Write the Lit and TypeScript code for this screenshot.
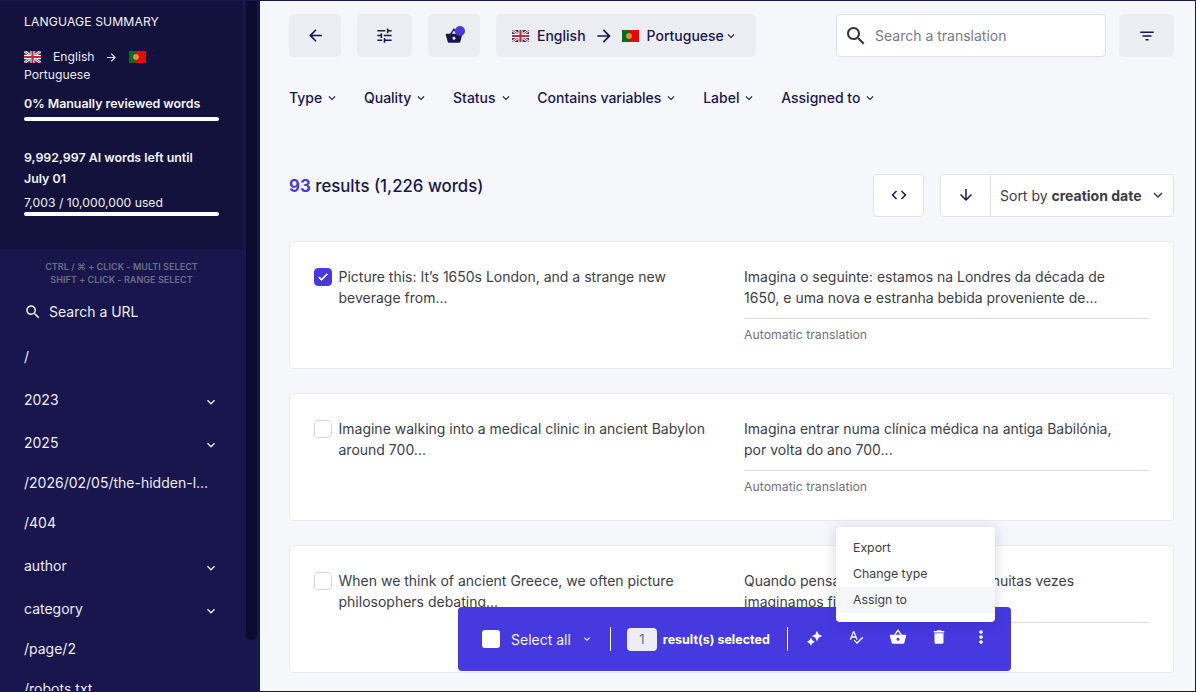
import { LitElement, html, css, svg } from "lit";
import { customElement } from "lit/decorators.js";

const P = {
  back: "M20 11H7.83l5.59-5.59L12 4l-8 8 8 8 1.41-1.41L7.83 13H20v-2z",
  tune: "M3 17v2h6v-2H3zM3 5v2h10V5H3zm10 16v-2h8v-2h-8v-2h-2v6h2zM7 9v2H3v2h4v2h2V9H7zm14 4v-2H11v2h10zm-6-4h2V7h4V5h-4V3h-2v6z",
  basket: "M17.21 9l-4.38-6.56c-.19-.28-.51-.42-.83-.42-.32 0-.64.14-.83.43L6.79 9H2c-.55 0-1 .45-1 1 0 .09.01.18.04.27l2.54 9.27c.23.84 1 1.46 1.92 1.46h13c.92 0 1.69-.62 1.93-1.46l2.54-9.27L23 10c0-.55-.45-1-1-1h-4.79zM9 9l3-4.4L15 9H9zm3 8c-1.1 0-2-.9-2-2s.9-2 2-2 2 .9 2 2-.9 2-2 2z",
  search: "M15.5 14h-.79l-.28-.27C15.41 12.59 16 11.11 16 9.5 16 5.91 13.09 3 9.5 3S3 5.91 3 9.5 5.91 16 9.5 16c1.61 0 3.09-.59 4.23-1.57l.27.28v.79l5 4.99L20.49 19l-4.99-5zm-6 0C7.01 14 5 11.99 5 9.5S7.01 5 9.5 5 14 7.01 14 9.5 11.99 14 9.5 14z",
  filter: "M10 18h4v-2h-4v2zM3 6v2h18V6H3zm3 7h12v-2H6v2z",
  chev: "M16.59 8.59L12 13.17 7.41 8.59 6 10l6 6 6-6z",
  code: "M9.4 16.6L4.8 12l4.6-4.6L8 6l-6 6 6 6 1.4-1.4zm5.2 0l4.6-4.6-4.6-4.6L16 6l6 6-6 6-1.4-1.4z",
  down: "M20 12l-1.41-1.41L13 16.17V4h-2v12.17l-5.58-5.59L4 12l8 8 8-8z",
  fwd: "M12 4l-1.41 1.41L16.17 11H4v2h12.17l-5.58 5.59L12 20l8-8z",
  trash: "M6 19c0 1.1.9 2 2 2h8c1.1 0 2-.9 2-2V7H6v12zM19 4h-3.5l-1-1h-5l-1 1H5v2h14V4z",
  more: "M12 8.2c1.2 0 2.2-1 2.2-2.2S13.2 3.8 12 3.8 9.800 4.800 9.800 6s1 2.200 2.200 2.200zm0 1.600c-1.200 0-2.200 1-2.200 2.200s1 2.200 2.200 2.200 2.200-1 2.200-2.200-1-2.200-2.200-2.200zm0 6c-1.200 0-2.200 1-2.200 2.200s1 2.200 2.200 2.200 2.200-1 2.200-2.200-1-2.200-2.200-2.200z",
  spell: "M12.45 16h2.09L9.43 3H7.57L2.46 16h2.09l1.12-3h5.64l1.14 3zm-6.02-5L8.5 5.48 10.57 11H6.43zm15.16.59l-8.09 8.09L9.83 16l-1.41 1.41 5.09 5.09L23 13l-1.41-1.41z",
  spark: "M15.5 2.500l2.300 5.200 5.200 2.300-5.200 2.300-2.300 5.200-2.300-5.200-5.200-2.300 5.200-2.300zM7 12.500l2 3.500 3.500 2-3.500 2-2 3.500-2-3.500-3.500-2 3.500-2z",
  check: "M9 16.17L4.83 12l-1.42 1.41L9 19 21 7l-1.41-1.41z",
};

const icon = (d: string, size: number, cls = "") =>
  html`<svg class=${cls} width=${size} height=${size} viewBox="0 0 24 24" fill="currentColor" aria-hidden="true">${svg`<path d=${d}></path>`}</svg>`;

const ukFlag = html`<svg class="flag" width="17" height="12" viewBox="0 0 17 12" aria-hidden="true">${svg`
  <rect width="17" height="12" fill="#2b3a80"></rect>
  <path d="M0 0L17 12M17 0L0 12" stroke="#fff" stroke-width="2.6"></path>
  <path d="M0 0L17 12M17 0L0 12" stroke="#c8283c" stroke-width="0.9"></path>
  <path d="M8.5 0V12M0 6H17" stroke="#fff" stroke-width="4"></path>
  <path d="M8.5 0V12M0 6H17" stroke="#c8283c" stroke-width="2.2"></path>`}</svg>`;

const ptFlag = html`<svg class="flag" width="17" height="12" viewBox="0 0 17 12" aria-hidden="true">${svg`
  <rect width="17" height="12" fill="#f40000"></rect>
  <rect width="7" height="12" fill="#0a6a1e"></rect>
  <circle cx="7" cy="6" r="2.7" fill="#e8c52a"></circle>
  <circle cx="7" cy="6" r="1.5" fill="#c8202a"></circle>
  <circle cx="7" cy="6" r="0.8" fill="#f4f4f4"></circle>`}</svg>`;

const tree: [string, boolean][] = [
  ["/", false],
  ["2023", true],
  ["2025", true],
  ["/2026/02/05/the-hidden-l...", false],
  ["/404", false],
  ["author", true],
  ["category", true],
  ["/page/2", false],
  ["/robots.txt", false],
];

const cards = [
  {
    src: "Picture this: It’s 1650s London, and a strange new beverage from...",
    tgt: "Imagina o seguinte: estamos na Londres da década de 1650, e uma nova e estranha bebida proveniente de...",
    on: true,
  },
  {
    src: "Imagine walking into a medical clinic in ancient Babylon around 700...",
    tgt: "Imagina entrar numa clínica médica na antiga Babilónia, por volta do ano 700...",
    on: false,
  },
  {
    src: "When we think of ancient Greece, we often picture philosophers debating...",
    tgt: "Quando pensamos na Grécia antiga, muitas vezes imaginamos filósofos a debater...",
    on: false,
  },
];

const filters = ["Type", "Quality", "Status", "Contains variables", "Label", "Assigned to"];

@customElement("app-root")
export class AppRoot extends LitElement {
  static styles = css`
    :host {
      display: block;
      position: relative;
      width: 1196px;
      height: 692px;
      box-sizing: border-box;
      border: 1px solid #18164d;
      border-left-width: 0;
      overflow: hidden;
      font-family: Inter, "Liberation Sans", sans-serif;
      color: #18164d;
      background: #f6f7fb;
    }
    * { box-sizing: border-box; }
    svg { display: block; flex: none; }
    .page { display: flex; height: 100%; }

    .sidebar { width: 260px; flex: none; display: flex; background: #18164d; color: #f4f4fa; height: 100%; }
    .side-col { width: 246px; flex: none; overflow: hidden; height: 100%; }
    .thumb { width: 11px; height: 640px; margin-top: -1px; background: #0c0b2e; border-radius: 0 0 5px 5px; flex: none; }

    .summary { width: 243px; height: 248px; background: #12123c; padding: 13px 0 0 24px; font-size: 12.2px; }
    .sum-title { font-size: 12.2px; line-height: 16px; font-weight: 400; letter-spacing: 0.1px; }
    .langs { margin-top: 18px; width: 195px; line-height: 18px; display: flex; flex-wrap: wrap; align-items: center; color: #e8e8f4; }
    .langs .en { margin: 0 10.5px 0 12px; }
    .langs .arr { margin-right: 10.5px; }
    .langs .pt-name { flex-basis: 100%; }
    .sum-bold { font-weight: 600; font-size: 12.4px; line-height: 21px; width: 195px; }
    .s1 { margin-top: 10px; line-height: 20px; }
    .bar { width: 195px; height: 4px; border-radius: 2px; background: #fff; }
    .s1 + .bar { margin-top: 3px; }
    .s2 { margin-top: 26px; }
    .used { font-size: 12.2px; margin-top: 5px; line-height: 18px; color: #f0f0f8; }
    .used + .bar { margin-top: 0; }

    .hint { width: 243px; margin-top: 11px; text-align: center; font-size: 9px; line-height: 13px; font-weight: 600; color: #6e6e88; letter-spacing: 0.05px; }
    .url { display: flex; align-items: center; padding-left: 24px; margin-top: 13.5px; height: 24px; gap: 7px; font-size: 14px; color: #ecedf6; }
    .tree { margin-top: 12.5px; }
    .row { display: flex; align-items: center; justify-content: space-between; width: 195px; margin-left: 24px; height: 40px; font-size: 14px; color: #ecedf6; white-space: nowrap; }
    .row.exp { height: 43px; padding-top: 3px; }
    .row.exp svg { margin-top: 6px; }

    .main { flex: 1; min-width: 0; padding: 13px 21px 0 29px; overflow: hidden; height: 100%; }
    .topbar { display: flex; align-items: stretch; height: 43px; }
    .tbtn { position: relative; width: 52px; background: #ecedf2; border-radius: 5px; display: flex; align-items: center; justify-content: center; margin-right: 16px; }
    .tbtn.w55 { width: 55px; }
    .dot { position: absolute; left: 27px; top: 12px; width: 10px; height: 10px; border-radius: 50%; background: #4639e0; }
    .lang-btn { width: 260px; margin-left: -0.5px; background: #ecedf2; border-radius: 5px; display: flex; align-items: center; padding-left: 16.500px; font-size: 14px; font-weight: 500; }
    .lang-btn .en { margin: 0 8px 0 8px; }
    .lang-btn .arr { margin-right: 8px; }
    .lang-btn .pt { margin-left: 8px; }
    .search { margin-left: auto; width: 270px; background: #fff; border: 1px solid #dfe1ea; border-radius: 4px; display: flex; align-items: center; padding-left: 7px; gap: 7px; font-size: 14px; color: #777985; }
    .search svg { color: #33333f; }
    .fbtn { width: 55px; margin: 0 0 0 13px; background: #ecedf2; border-radius: 5px; display: flex; align-items: center; justify-content: center; }

    .filters { display: flex; gap: 24.750px; margin-top: 28px; height: 24px; align-items: center; font-size: 14px; font-weight: 500; }
    .filter { display: flex; align-items: center; gap: 3px; }
    .filter svg { margin-top: 2px; }

    .results-head { display: flex; justify-content: space-between; margin-top: 55px; height: 77px; }
    .count { font-size: 16.8px; font-weight: 500; line-height: 24px; margin-top: 10px; }
    .count b { color: #4639e0; font-weight: 700; }
    .controls { display: flex; gap: 16px; align-items: flex-start; margin-top: 9.500px; }
    .cbtn { height: 43px; width: 51px; background: #fff; border: 1px solid #e2e4ec; border-radius: 4px; display: flex; align-items: center; justify-content: center; }
    .sortgrp { display: flex; height: 43px; background: #fff; border: 1px solid #e2e4ec; border-radius: 4px; }
    .sortgrp .arrow { width: 50px; display: flex; align-items: center; justify-content: center; border-right: 1px solid #e2e4ec; }
    .sortgrp .sort { width: 182px; display: flex; align-items: center; justify-content: space-between; padding: 0 6px 0 9px; font-size: 14px; color: #3b3b48; }
    .sort b { font-weight: 700; }

    .cards { display: flex; flex-direction: column; gap: 24px; }
    .card { height: 128px; background: #fff; border: 1px solid #e9eaf1; border-radius: 4px; padding: 24px 24px 0; display: grid; grid-template-columns: 430px 405px; font-size: 14px; line-height: 21px; color: #3d3d48; }
    .src { display: flex; gap: 6.500px; padding-right: 30px; }
    .box { width: 18px; height: 18px; margin-top: 2px; flex: none; border-radius: 4px; border: 1px solid #d4d6df; background: #fff; display: flex; align-items: center; justify-content: center; color: #fff; }
    .box.on { background: #4639e0; border-color: #4639e0; }
    .box svg { stroke: currentColor; stroke-width: 2; }
    .tgt-text { height: 52px; padding-right: 30px; }
    .tgt-foot { border-top: 1px solid #dcdde3; padding-top: 6px; font-size: 12.300px; line-height: 20px; color: #71727e; }

    .action { position: absolute; left: 458px; top: 606px; width: 553px; height: 64px; background: #4639e0; border-radius: 4px; color: #fff; display: flex; align-items: center; padding-left: 24px; }
    .sel-box { width: 18px; height: 18px; border-radius: 3px; background: #fff; }
    .sel-all { font-size: 14px; margin: 0 10px 0 11px; color: #f2f2ff; }
    .sep { width: 1px; height: 24px; background: #fff; margin: 0 16px 0 17px; }
    .sep.second { margin: 0 6px 0 17px; }
    .num { width: 30px; height: 23px; border-radius: 4px; background: #ecedf2; color: #6b6c7c; font-size: 13px; display: flex; align-items: center; justify-content: center; }
    .sel-text { font-size: 12.500px; font-weight: 700; margin-left: 6px; white-space: nowrap; }
    .icons { display: flex; align-items: center; margin-top: -4px; }
    .ic { width: 41.500px; display: flex; align-items: center; justify-content: center; }

    .menu { position: absolute; left: 836px; top: 526px; width: 159px; height: 95px; background: #fff; border-radius: 4px; box-shadow: 0 2px 14px rgba(30, 30, 80, 0.18); padding-top: 7.500px; font-size: 12.300px; color: #3d3d48; }
    .mi { height: 26px; padding-left: 17px; display: flex; align-items: center; }
    .mi.hover { background: #f6f7f9; }
  `;

  render() {
    return html`
      <div class="page">
        <aside class="sidebar">
          <div class="side-col">
            <section class="summary">
              <div class="sum-title">LANGUAGE SUMMARY</div>
              <div class="langs">
                ${ukFlag}<span class="en">English</span>
                ${icon(P.fwd, 13, "arr")}${ptFlag}<span class="pt-name">Portuguese</span>
              </div>
              <div class="sum-bold s1">0% Manually reviewed words</div>
              <div class="bar"></div>
              <div class="sum-bold s2">9,992,997 AI words left until July 01</div>
              <div class="used">7,003 / 10,000,000 used</div>
              <div class="bar"></div>
            </section>
            <div class="hint">CTRL / ⌘ + CLICK - MULTI SELECT<br />SHIFT + CLICK - RANGE SELECT</div>
            <div class="url">${icon(P.search, 18)}<span>Search a URL</span></div>
            <div class="tree">
              ${tree.map(
                ([t, e]) => html`<div class="row ${e ? "exp" : ""}"><span>${t}</span>${e ? icon(P.chev, 16) : ""}</div>`
              )}
            </div>
          </div>
          <div class="thumb"></div>
        </aside>

        <main class="main">
          <div class="topbar">
            <div class="tbtn">${icon(P.back, 19)}</div>
            <div class="tbtn w55">${icon(P.tune, 19)}</div>
            <div class="tbtn">${icon(P.basket, 18)}<span class="dot"></span></div>
            <div class="lang-btn">
              ${ukFlag}<span class="en">English</span>
              ${icon(P.fwd, 20, "arr")}${ptFlag}<span class="pt">Portuguese</span>${icon(P.chev, 14)}
            </div>
            <div class="search">${icon(P.search, 24)}<span>Search a translation</span></div>
            <div class="fbtn">${icon(P.filter, 18)}</div>
          </div>

          <div class="filters">
            ${filters.map((f) => html`<div class="filter"><span>${f}</span>${icon(P.chev, 14)}</div>`)}
          </div>

          <div class="results-head">
            <div class="count"><b>93</b> results (1,226 words)</div>
            <div class="controls">
              <div class="cbtn">${icon(P.code, 18)}</div>
              <div class="sortgrp">
                <div class="arrow">${icon(P.down, 18)}</div>
                <div class="sort"><span>Sort by <b>creation date</b></span>${icon(P.chev, 18)}</div>
              </div>
            </div>
          </div>

          <div class="cards">
            ${cards.map(
              (c) => html`<article class="card">
                <div class="src">
                  <span class="box ${c.on ? "on" : ""}">${c.on ? icon(P.check, 12) : ""}</span>
                  <span>${c.src}</span>
                </div>
                <div class="tgt">
                  <div class="tgt-text">${c.tgt}</div>
                  <div class="tgt-foot">Automatic translation</div>
                </div>
              </article>`
            )}
          </div>
        </main>
      </div>

      <div class="action">
        <span class="sel-box"></span>
        <span class="sel-all">Select all</span>${icon(P.chev, 12)}
        <span class="sep"></span>
        <span class="num">1</span>
        <span class="sel-text">result(s) selected</span>
        <span class="sep second"></span>
        <div class="icons">
          <span class="ic">${icon(P.spark, 17)}</span>
          <span class="ic">${icon(P.spell, 16)}</span>
          <span class="ic">${icon(P.basket, 18)}</span>
          <span class="ic">${icon(P.trash, 18)}</span>
          <span class="ic">${icon(P.more, 20)}</span>
        </div>
      </div>
      <div class="menu">
        <div class="mi">Export</div>
        <div class="mi">Change type</div>
        <div class="mi hover">Assign to</div>
      </div>
    `;
  }
}
